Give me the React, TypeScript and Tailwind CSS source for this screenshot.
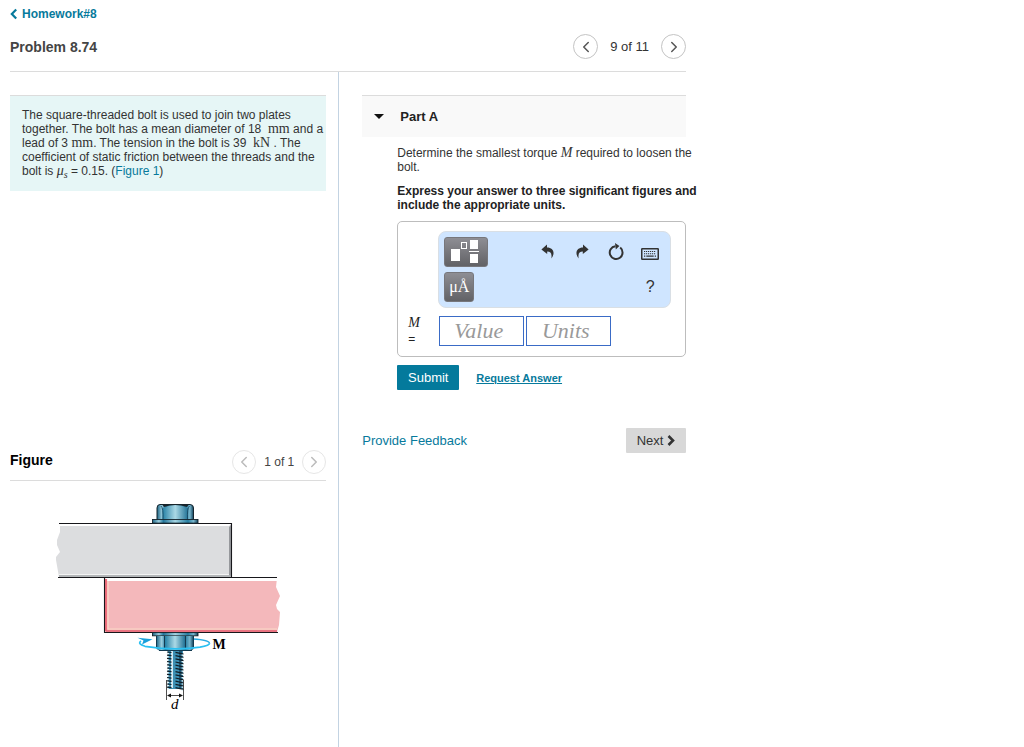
import type { ReactNode } from 'react';
import { ChevronLeft, ChevronRight } from 'lucide-react';

const MathText = ({ children, italic = false }: { children: ReactNode; italic?: boolean }) => (
  <span className={`font-['Liberation_Serif',serif] text-[14px] leading-[10px] ${italic ? 'italic' : ''}`}>
    {children}
  </span>
);

const Header = () => (
  <header className="border-b border-[#dcdcdc]">
    <a href="#homework" className="flex items-center gap-1 pt-1.5 text-xs leading-4 font-bold text-[#077a9c]">
      <svg className="h-3 w-2" viewBox="0 0 8 12" fill="none" stroke="currentColor" strokeWidth="2.2">
        <path d="M6.2 1.4 L1.8 6 L6.2 10.6" />
      </svg>
      Homework#8
    </a>
    <div className="flex items-center justify-between pt-3 pb-3">
      <h1 className="text-sm font-bold text-[#444]">Problem 8.74</h1>
      <nav className="flex items-center gap-3 text-[13px] text-[#333]">
        <button
          aria-label="Previous problem"
          className="flex size-[25px] items-center justify-center rounded-full border border-[#c4c4c4] text-[#555]"
        >
          <ChevronLeft className="size-[18px]" strokeWidth={2} />
        </button>
        <span>9 of 11</span>
        <button
          aria-label="Next problem"
          className="flex size-[25px] items-center justify-center rounded-full border border-[#c4c4c4] text-[#555]"
        >
          <ChevronRight className="size-[18px]" strokeWidth={2} />
        </button>
      </nav>
    </div>
  </header>
);

const BoltFigure = () => (
  <svg
    className="mt-[19px] ml-10 w-60"
    viewBox="0 0 240 220"
    role="img"
    aria-label="Bolt joining two plates"
  >
    <defs>
      <linearGradient id="steel">
        <stop offset="0" stopColor="#1d6484" />
        <stop offset="0.14" stopColor="#9ccfe0" />
        <stop offset="0.24" stopColor="#24769b" />
        <stop offset="0.5" stopColor="#a6d5e3" />
        <stop offset="0.78" stopColor="#267fa3" />
        <stop offset="0.9" stopColor="#79b6cd" />
        <stop offset="1" stopColor="#0f3f58" />
      </linearGradient>
      <linearGradient id="face">
        <stop offset="0" stopColor="#2580a5" />
        <stop offset="0.5" stopColor="#abd9e6" />
        <stop offset="1" stopColor="#217296" />
      </linearGradient>
    </defs>

    {/* upper plate */}
    <path d="M10 24 H182 V77 H9 L6 60 V57 L10 52 L7 45 V40 L10 32Z" fill="#dcdddf" />
    <path d="M10 24 H181 L179 26 H10Z" fill="#fff" />
    <path d="M182 24 V77 L179 75 V27Z" fill="#96989c" />
    <path d="M9 74.5 H179" stroke="#f3f3f3" />
    <path d="M9 76 H181" stroke="#a6a8ab" strokeWidth="1.5" />
    <path d="M9 23.5 H181.5 V77.5" fill="none" stroke="#17171b" strokeWidth="1.1" />

    {/* lower plate */}
    <path d="M55 78 H227 L226 87 L230 96 L226 105 L227 109 L230 112 L229 125 L227 132 H55Z" fill="#f4b8bb" />
    <path d="M55 78 H227 V81 H57Z" fill="#fff" />
    <path d="M56 79 V131" stroke="#ee6d7b" strokeWidth="2.2" />
    <path d="M58 81 V129 H227" fill="none" stroke="#f9d9c8" strokeWidth="1.2" />
    <path d="M56 131 H227" stroke="#e65c6e" strokeWidth="1.6" />
    <path d="M8 77.5 H227" stroke="#17171b" strokeWidth="1.1" />
    <path d="M54.5 77 V132.5 H228" fill="none" stroke="#17171b" strokeWidth="1.1" />

    {/* bolt head and washer */}
    <path d="M107 20 V8 Q107 4.5 110 4.5 H140 Q143.5 4.5 143.5 8 V20Z" fill="url(#steel)" stroke="#15242d" strokeWidth="1" />
    <path d="M112.5 20 V8 Q125 2.5 138 8 V20Z" fill="url(#face)" />
    <path d="M112 4.2 H139 L137 7 Q125 3 114 7Z" fill="#18242b" />
    <path d="M111 6 Q113.5 8 113 20 M139.5 6 Q137 8 137.5 20" fill="none" stroke="#15415a" strokeWidth="0.8" />
    <rect x="102.5" y="19.5" width="45.5" height="3.6" fill="url(#steel)" stroke="#15242d" strokeWidth="0.9" />

    {/* back half of the moment arrow, hidden behind the nut */}
    <path d="M143 139 Q159.5 140 159.5 143.5" fill="none" stroke="#29abe2" strokeWidth="1.5" />

    {/* threaded shank */}
    <rect x="118" y="150" width="15" height="39" fill="#3c90b4" />
    <path d="M122 151 V188" stroke="#d3eaf3" strokeWidth="2" />
    <path d="M130.5 151 V188" stroke="#1b5877" strokeWidth="3" />
    {Array.from({ length: 12 }, (_, i) => (
      <g key={i} strokeWidth="1.2">
        <path d={`M117 ${152 + i * 3.2} L121.5 ${152.5 + i * 3.2}`} stroke="#101c24" />
        <path d={`M125.5 ${152.4 + i * 3.2} L133.5 ${154.2 + i * 3.2}`} stroke="#101c24" />
        <path d={`M117 ${153.6 + i * 3.2} H119 M131.5 ${155.2 + i * 3.2} H133.5`} stroke="#e3f3f8" />
      </g>
    ))}

    {/* nut */}
    <rect x="102.5" y="132.6" width="45.5" height="3.2" fill="url(#steel)" stroke="#15242d" strokeWidth="0.9" />
    <path d="M106.5 136 H143.5 V149 L141.5 150.5 H109 L106.5 149Z" fill="url(#steel)" />
    <rect x="115" y="136" width="20" height="13" fill="url(#face)" />
    <path d="M106.5 136 V148 M114.5 136 V149 M135.5 136 V149 M143.5 136 V148 M109 150.5 H142" stroke="#123a50" strokeWidth="1" />

    {/* moment arrow */}
    <path d="M91 141 Q87 144 95 146.3 Q125 151 150 147.2 Q159.5 145.5 159.5 143.2" fill="none" stroke="#29c0f2" strokeWidth="1.7" />
    <path d="M87.5 137.8 L102.5 139.2 L92 144.5 L93.5 140.5Z" fill="#18a0dc" />
    <text x="162.5" y="149" className="font-['Liberation_Serif',serif] text-[14px] font-bold">M</text>

    {/* diameter */}
    <path d="M116.5 180 V200 M133.5 180 V200 M119 195.5 H131" stroke="#222" strokeWidth="0.8" />
    <path d="M117 195.5 L121 193.5 V197.5Z M133 195.5 L129 193.5 V197.5Z" fill="#111" />
    <text x="121" y="209" className="font-['Liberation_Serif',serif] text-[15px] italic">d</text>
  </svg>
);

const ProblemColumn = () => (
  <div className="w-[48.7%] border-r border-[#c3d3e2] pt-[23px] pr-3">
    <section className="min-h-[355px]">
      <p className="border-t border-[#dcdcdc] bg-[#e6f6f6] pt-3 pb-[13px] pl-3 text-xs leading-[14px] text-[#333]">
        The square-threaded bolt is used to join two plates together. The bolt has a mean diameter of
        18 &nbsp;<MathText>mm</MathText> and a lead of 3 <MathText>mm</MathText>. The tension in the bolt is
        39 &nbsp;<MathText>kN</MathText> . The coefficient of static friction between the threads and the bolt
        is <MathText italic>μ<sub className="text-[10px]">s</sub></MathText> = 0.15. (
        <a href="#figure" className="text-[#077a9c]">Figure 1</a>)
      </p>
    </section>

    <section id="figure">
      <div className="flex items-center justify-between border-b border-[#dcdcdc] pb-1.5">
        <h2 className="pb-1 text-sm font-bold text-black">Figure</h2>
        <div className="flex items-center gap-2 text-xs text-[#444]">
          <button
            aria-label="Previous figure"
            className="flex size-6 items-center justify-center rounded-full border border-[#e6e6e6] text-[#bbb]"
          >
            <ChevronLeft className="size-[18px]" strokeWidth={2} />
          </button>
          <span>1 of 1</span>
          <button
            aria-label="Next figure"
            className="flex size-6 items-center justify-center rounded-full border border-[#e6e6e6] text-[#bbb]"
          >
            <ChevronRight className="size-[18px]" strokeWidth={2} />
          </button>
        </div>
      </div>
      <BoltFigure />
    </section>
  </div>
);

const toolButton = 'flex items-center justify-center text-[#333]';
const paletteButton =
  'flex h-[30px] items-center justify-center rounded-[3px] border border-[#77777c] bg-linear-to-b from-[#8e8e94] to-[#626266] text-white';

const Toolbar = () => (
  <div className="rounded-lg border border-[#d9dfe5] bg-[#cfe5ff] py-[5px] pr-[3px] pl-[5px]">
    <div className="flex h-[30px] justify-between">
      <button aria-label="Templates" className={`${paletteButton} w-11`}>
        <svg className="h-6 w-8" viewBox="0 0 32 24" fill="#fff">
          <rect x="1" y="9" width="9" height="12" />
          <rect x="11.5" y="2.5" width="5" height="6" fill="none" stroke="#fff" />
          <rect x="20" y="0" width="8" height="9" />
          <rect x="19" y="11" width="10" height="1" />
          <rect x="20" y="14" width="8" height="9" />
        </svg>
      </button>
      <div className="grid grid-cols-[34px_34px_34px_34px]">
        <button aria-label="Undo" className={toolButton}>
          <svg className="size-4" viewBox="0 0 16 16" fill="currentColor">
            <path d="M7 0.6 L1.4 5.4 L7.2 10 V7.6 C10.6 7.6 12 9.4 11.4 14.4 C15.6 9 13.4 3.4 7 3.4Z" />
          </svg>
        </button>
        <button aria-label="Redo" className={toolButton}>
          <svg className="size-4" viewBox="0 0 16 16" fill="currentColor">
            <path d="M9 0.6 L14.6 5.4 L8.8 10 V7.6 C5.4 7.6 4 9.4 4.6 14.4 C0.4 9 2.6 3.4 9 3.4Z" />
          </svg>
        </button>
        <button aria-label="Reset" className={toolButton}>
          <svg className="size-[18px]" viewBox="0 0 18 18" fill="none" stroke="currentColor">
            <path d="M13.2 4.6 A6.4 6.4 0 1 1 8.4 3.2" strokeWidth="2" />
            <path d="M8 0 L12.4 3 L8.8 6.6Z" fill="currentColor" stroke="none" />
          </svg>
        </button>
        <button aria-label="Keyboard" className={toolButton}>
          <svg className="mt-1 h-3 w-[18px]" viewBox="0 0 18 12" fill="none" stroke="currentColor">
            <rect x="0.75" y="0.75" width="16.5" height="10.5" rx="0.5" strokeWidth="1.5" />
            <path d="M3 3.5 H15 M3 5.7 H15" strokeWidth="1.1" strokeDasharray="1.2 0.8" />
            <path d="M3 8.2 H4.3 M5.3 8.2 H12.7 M13.7 8.2 H15" strokeWidth="1.3" />
          </svg>
        </button>
      </div>
    </div>
    <div className="mt-[5px] flex h-[30px] justify-between">
      <button
        aria-label="Units and symbols"
        className={`${paletteButton} w-[30px] font-['Liberation_Serif',serif] text-base`}
      >
        μÅ
      </button>
      <button aria-label="Help" className={`${toolButton} w-[34px] text-base`}>
        ?
      </button>
    </div>
  </div>
);

const answerInput =
  "h-[30px] w-[85px] border border-[#3a6bc6] bg-white pr-1.5 text-center font-['Liberation_Serif',serif] text-[22px] italic placeholder:text-[#999]";

const PartColumn = () => (
  <div className="min-w-0 flex-1 pt-[23px] pl-[23px]">
    <h2 className="border-t border-[#dcdcdc] bg-[#f9f9f9] text-[13px] font-bold text-[#222]">
      <button className="flex h-[41px] w-full items-center gap-4 pl-3">
        <svg className="h-[5px] w-[10px]" viewBox="0 0 10 5">
          <path d="M0 0 H10 L5 5Z" fill="#111" />
        </svg>
        Part A
      </button>
    </h2>

    <div className="pt-[9px] pl-[35px] text-xs leading-[14px] text-[#333]">
      <div className="-mr-4">
        <p>
          Determine the smallest torque <MathText italic>M</MathText> required to loosen the bolt.
        </p>
        <p className="mt-[10px] font-bold text-[#222]">
          Express your answer to three significant figures and include the appropriate units.
        </p>
      </div>

      <form>
        <div className="mt-[9px] rounded-[5px] border border-[#bdbdbd] pt-[9px] pr-[14px] pb-[10px] pl-[10px]">
          <div className="ml-[30px]">
            <Toolbar />
          </div>
          <div className="mt-2 flex">
            <label htmlFor="value" className="flex w-[31px] flex-col gap-1 pt-0.5 text-[#222]">
              <MathText italic>M</MathText>
              <span>=</span>
            </label>
            <div className="flex gap-0.5">
              <input id="value" placeholder="Value" className={answerInput} />
              <input aria-label="Units" placeholder="Units" className={answerInput} />
            </div>
          </div>
        </div>
        <div className="mt-2 flex items-center gap-[17px]">
          <button type="button" className="h-[25px] w-[62px] rounded-[1px] bg-[#047a9c] text-[13px] text-white">
            Submit
          </button>
          <a href="#answer" className="text-[11px] font-bold text-[#077a9c] underline">
            Request Answer
          </a>
        </div>
      </form>
    </div>

    <footer className="mt-[38px] flex items-center justify-between text-[13px]">
      <a href="#feedback" className="text-[#077a9c]">Provide Feedback</a>
      <button className="flex h-[25px] w-[60px] items-center justify-center gap-1 rounded-[1px] bg-[#d8d8d8] text-[#333]">
        Next
        <svg className="h-[11px] w-2" viewBox="0 0 8 11" fill="none" stroke="currentColor" strokeWidth="2.6">
          <path d="M1.5 1 L6 5.5 L1.5 10" />
        </svg>
      </button>
    </footer>
  </div>
);

export default function App() {
  return (
    <div className="min-h-screen bg-white font-['Liberation_Sans',Arial,sans-serif]">
      <main className="flex min-h-screen w-[67%] min-w-[686px] flex-col pl-2.5">
        <Header />
        <div className="flex flex-1">
          <ProblemColumn />
          <PartColumn />
        </div>
      </main>
    </div>
  );
}
